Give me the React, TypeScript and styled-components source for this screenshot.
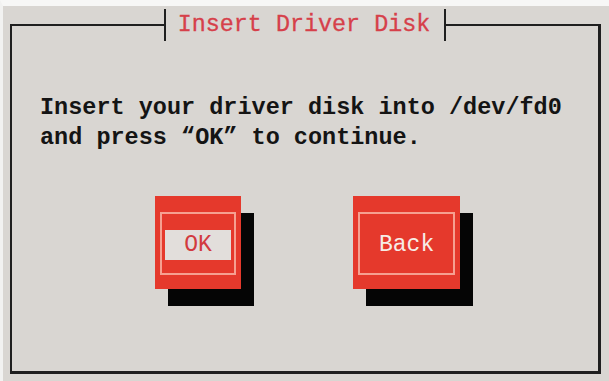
import React from "react";
import styled, { createGlobalStyle } from "styled-components";

const Global = createGlobalStyle`
  html, body { margin: 0; padding: 0; background: #ffffff; }
  body { font-family: "Liberation Mono", "DejaVu Sans Mono", monospace; }
`;

const Page = styled.div`
  width: 609px;
  height: 381px;
  box-sizing: border-box;
  background: #d9d6d2;
  border-top: 6px solid #f7f7f6;
  border-left: 3px solid #f2f2f1;
  padding: 3px 8px 0 7px;
`;

const Frame = styled.fieldset`
  margin: 0;
  padding: 0;
  height: 365px;
  box-sizing: border-box;
  border-style: solid;
  border-color: #1f1f1f;
  border-width: 2px 3px 3px 2px;
  min-width: 0;
`;

const Title = styled.legend`
  margin: 0 auto;
  padding: 0 14px 0 12px;
  height: 32px;
  line-height: 32px;
  border-left: 2px solid #1f1f1f;
  border-right: 2px solid #1f1f1f;
  font-family: "Liberation Mono", monospace;
  font-size: 23.4px;
  color: #d6404a;
  -webkit-text-stroke: 0.3px #d6404a;
`;

const Message = styled.p`
  margin: 52px 0 0 28px;
  font-family: "Liberation Mono", monospace;
  font-weight: bold;
  font-size: 23.5px;
  line-height: 30px;
  color: #141414;
  white-space: pre;
`;

const ButtonRow = styled.div`
  display: flex;
  gap: 112px;
  margin: 43px 0 0 143px;
`;

const ButtonBox = styled.div`
  background: #e5392c;
  padding: 16px 5px 14px;
  box-shadow: 13px 17px 0 #050505;
`;

const ButtonInner = styled.div`
  border: 2px solid #f6a091;
  padding: 16px 3px 13px;
`;

const ButtonLabel = styled.div<{ $focused?: boolean }>`
  min-width: 66px;
  height: 30px;
  line-height: 30px;
  padding: 0 16px;
  box-sizing: border-box;
  text-align: center;
  font-family: "Liberation Mono", monospace;
  font-size: 23px;
  background: ${(p) => (p.$focused ? "#e2dedb" : "transparent")};
  color: ${(p) => (p.$focused ? "#d23a3e" : "#f6ece6")};
`;

const Button = ({ label, focused }: { label: string; focused?: boolean }) => (
  <ButtonBox>
    <ButtonInner>
      <ButtonLabel $focused={focused}>{label}</ButtonLabel>
    </ButtonInner>
  </ButtonBox>
);

export default function App() {
  return (
    <>
      <Global />
      <Page>
        <Frame>
          <Title>Insert Driver Disk</Title>
          <Message>{"Insert your driver disk into /dev/fd0\nand press \u201COK\u201D to continue."}</Message>
          <ButtonRow>
            <Button label="OK" focused />
            <Button label="Back" />
          </ButtonRow>
        </Frame>
      </Page>
    </>
  );
}
